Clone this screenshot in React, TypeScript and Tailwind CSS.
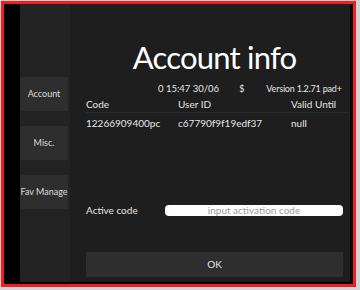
export default function App() {
  const font = { fontFamily: "Lato, 'Noto Sans', sans-serif" };
  return (
    <div className="w-[360px] h-[290px] bg-[#d4d4d4] pl-px pt-px" style={font}>
      <div className="w-[355px] h-[286px] border-[3px] border-[#f21d1d] bg-black flex pl-4 pr-[3px] pb-[2px]">
        <div className="w-[50px] shrink-0 bg-[#232323] flex flex-col pt-[73px] gap-[15px]">
          {["Account", "Misc.", "Fav Manage"].map((t) => (
            <div
              key={t}
              className="w-[48px] h-[34px] bg-[#2e2e2e] flex items-center justify-center text-[9px] text-[#dcdcdc] whitespace-nowrap"
            >
              {t}
            </div>
          ))}
        </div>
        <div className="flex-1 min-w-0 bg-[#1e1e1e] flex flex-col pl-4 pr-[7px] text-[#e6e6e6]">
          <h1 className="mt-[33px] text-[31px] leading-[40px] text-white text-center tracking-tight">
            Account info
          </h1>
          <div className="mt-[6px] flex items-center text-[9px] leading-3 pl-[72px] whitespace-nowrap">
            <span className="text-[9.5px]">0 15:47 30/06</span>
            <span className="ml-[20px]">$</span>
            <span className="ml-[22px] tracking-[-0.2px]">Version 1.2.71 pad+</span>
          </div>
          <div className="mt-[2px] flex text-[10px] h-[16px] items-center border-b border-[#2a2a2a] -mr-[7px] whitespace-nowrap">
            <span className="w-[92px]">Code</span>
            <span className="w-[113px]">User ID</span>
            <span>Valid Until</span>
          </div>
          <div className="flex text-[10px] h-[20px] items-center whitespace-nowrap">
            <span className="w-[92px]">12266909400pc</span>
            <span className="w-[113px]">c67790f9f19edf37</span>
            <span>null</span>
          </div>
          <div className="mt-[70px] flex items-center text-[10px]">
            <span className="w-[79px]">Active code</span>
            <div className="flex-1 h-[11px] bg-white rounded-[4px] flex items-center justify-center text-[10px] text-[#9a9a9a]">
              input activation code
            </div>
          </div>
          <div className="mt-[34px] h-[25px] bg-[#2e2e2e] flex items-center justify-center text-[10px]">
            OK
          </div>
        </div>
      </div>
    </div>
  );
}
